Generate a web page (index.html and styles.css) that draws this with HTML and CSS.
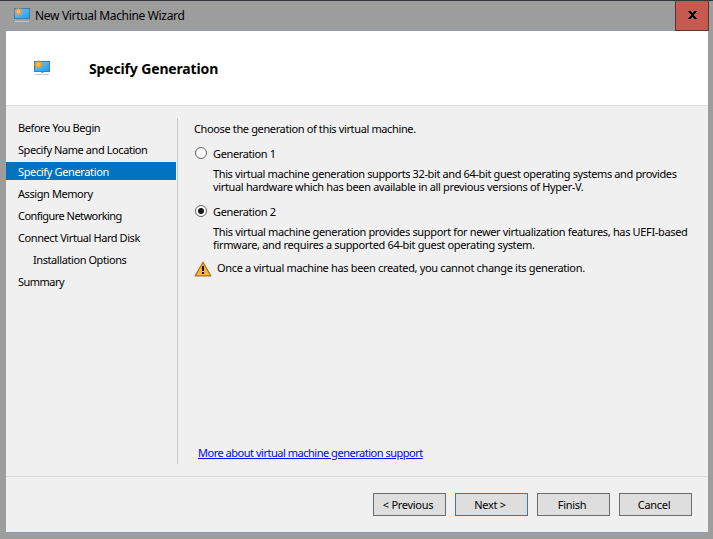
FILE: index.html
```html
<!DOCTYPE html>
<html lang="en">
<head>
<meta charset="utf-8">
<title>New Virtual Machine Wizard</title>
<link rel="stylesheet" href="styles.css">
</head>
<body>
<svg width="0" height="0" class="defs" aria-hidden="true">
  <defs>
    <linearGradient id="screen" x1="0" y1="0" x2="1" y2="1"><stop offset="0" stop-color="#68c9fb"/><stop offset="1" stop-color="#249dee"/></linearGradient>
    <symbol id="vm" viewBox="0 0 18 16">
      <rect x="1.500" y="1.500" width="15" height="10" fill="url(#screen)" stroke="#417d9f"/>
      <path d="M8 12h3v1H8z" fill="#8bb1ca"/>
      <path d="M2 14.500h14" stroke="#b9cad9"/>
      <path d="M5.500 0.500v8M1.500 4.500h8M2.700 1.700l5.600 5.600M8.300 1.700l-5.600 5.600" stroke="#f5a21b" stroke-width="1.400"/>
      <circle cx="5.500" cy="4.500" r="2" fill="#ffbd40"/>
    </symbol>
  </defs>
</svg>
<div class="window">
  <header class="titlebar">
    <svg class="app-icon"><use href="#vm"/></svg>
    <span class="title">New Virtual Machine Wizard</span>
    <button class="close" aria-label="Close"><svg width="9" height="8" viewBox="0 0 9 8"><path d="M0 0h3v1h1v1h1V1h1V0h3v1H8v1H7v1H6v2h1v1h1v1h1v1H6V7H5V6H4v1H3v1H0V7h1V6h1V5h1V3H2V2H1V1H0z" fill="#000"/></svg></button>
  </header>
  <div class="client">
    <div class="banner">
      <svg class="banner-icon"><use href="#vm"/></svg>
      <h1>Specify Generation</h1>
    </div>
    <div class="body">
      <nav>
        <a>Before You Begin</a>
        <a>Specify Name and Location</a>
        <a class="active">Specify Generation</a>
        <a>Assign Memory</a>
        <a class="tight">Configure Networking</a>
        <a>Connect Virtual Hard Disk</a>
        <a class="sub">Installation Options</a>
        <a class="tight">Summary</a>
      </nav>
      <main>
        <p class="lead">Choose the generation of this virtual machine.</p>
        <label class="option"><span class="radio"></span><span>Generation 1</span></label>
        <p class="desc">This virtual machine generation supports 32-bit and 64-bit guest operating systems and provides<br><span class="loose">virtual hardware which has been available in all previous versions of Hyper-V.</span></p>
        <label class="option"><span class="radio checked"></span><span>Generation 2</span></label>
        <p class="desc loose">This virtual machine generation provides support for newer virtualization features, has UEFI-based<br>firmware, and requires a supported 64-bit guest operating system.</p>
        <div class="warning">
          <svg width="18" height="16" viewBox="0 0 18 16"><path d="M9 1.200L16.800 14.900H1.200z" fill="#fcb536" stroke="#ac7420" stroke-width="1.300" stroke-linejoin="round"/><path d="M8 5h2v5H8zM8 11h2v2H8z" fill="#111"/></svg>
          <span>Once a virtual machine has been created, you cannot change its generation.</span>
        </div>
        <a class="more">More about virtual machine generation support</a>
      </main>
    </div>
    <footer>
      <button>&lt; Previous</button>
      <button class="default">Next &gt;</button>
      <button>Finish</button>
      <button>Cancel</button>
    </footer>
  </div>
</div>
</body>
</html>
```

FILE: styles.css
```css
* { box-sizing: border-box; }
body {
  margin: 0;
  overflow: hidden;
  font: 11px/13px "Noto Sans", sans-serif;
  letter-spacing: -.37px;
  color: #000;
}
p, h1 { margin: 0; }
.defs { position: absolute; }
.window {
  width: 713px;
  height: 539px;
  background: #9d9d9d;
  border-top: 1px solid #36363d;
  padding: 0 5px 6px 6px;
  display: flex;
  flex-direction: column;
}
.titlebar { height: 29px; display: flex; }
.app-icon { width: 18px; height: 16px; margin: 6px 0 0 7px; }
.title { margin: 6px 0 0 4px; font-size: 12px; line-height: 17px; white-space: nowrap; letter-spacing: -.33px; }
.close {
  position: relative;
  width: 34px;
  height: 30px;
  margin: 0 -1px 0 auto;
  padding: 0 0 1px;
  background: #c45a50;
  border: 1px solid #593532;
  border-top: 0;
  display: grid;
  place-items: center;
}
.client {
  flex: 1;
  background: #f0f0f0;
  border-top: 1px solid #8d9bb0;
  border-bottom: 1px solid #8d9bb0;
  display: flex;
  flex-direction: column;
}
.banner {
  height: 75px;
  background: #fff;
  border-bottom: 1px solid #dfdfdf;
  display: flex;
}
.banner-icon { width: 18px; height: 16px; margin: 29px 38px 0 27px; }
h1 { font-size: 14px; line-height: 18px; margin-top: 29px; letter-spacing: -.15px; }
.body { flex: 1; display: flex; padding-top: 12px; }
nav {
  flex: none;
  width: 172px;
  height: 346px;
  padding-right: 1px;
  border-right: 1px solid #c9c9c9;
  display: flex;
  flex-direction: column;
  gap: 4px;
  letter-spacing: -.42px;
}
nav a { height: 18px; padding-left: 12px; line-height: 20px; white-space: nowrap; }
nav .active { background: #0173c1; color: #fff; letter-spacing: -.36px; }
nav .tight { letter-spacing: -.54px; }
nav .sub { padding-left: 27px; }
main { padding-left: 16px; white-space: nowrap; }
.lead { margin-top: 4px; }
.option { display: flex; gap: 6px; height: 14px; margin-top: 11px; line-height: 15px; }
.radio {
  width: 12px;
  height: 12px;
  margin: 1px 0 0 1px;
  border: 1px solid #606060;
  border-radius: 50%;
  background: #fff;
}
.radio.checked { background: radial-gradient(circle, #1c1c1c 0 2.700px, #fff 3.400px); }
.desc { margin: 7px 0 0 19px; letter-spacing: -.38px; }
.loose { letter-spacing: -.34px; }
.desc + .option { margin-top: 11px; }
.warning { display: flex; gap: 5px; margin-top: 10px; letter-spacing: -.33px; }
.more { display: block; margin: 169px 0 0 4px; color: #00f; text-decoration: underline; letter-spacing: -.48px; }
footer {
  height: 56px;
  border-top: 1px solid #dadada;
  padding: 16px 16px 0;
  display: flex;
  justify-content: flex-end;
  gap: 9px;
}
footer button {
  width: 73px;
  height: 23px;
  padding: 0 3px 0 0;
  font: inherit;
  letter-spacing: -.3px;
  color: #000;
  background: #dedede;
  border: 1px solid #6d6d6d;
}
footer .default { border-color: #3979ae; padding-right: 3px; }
```
